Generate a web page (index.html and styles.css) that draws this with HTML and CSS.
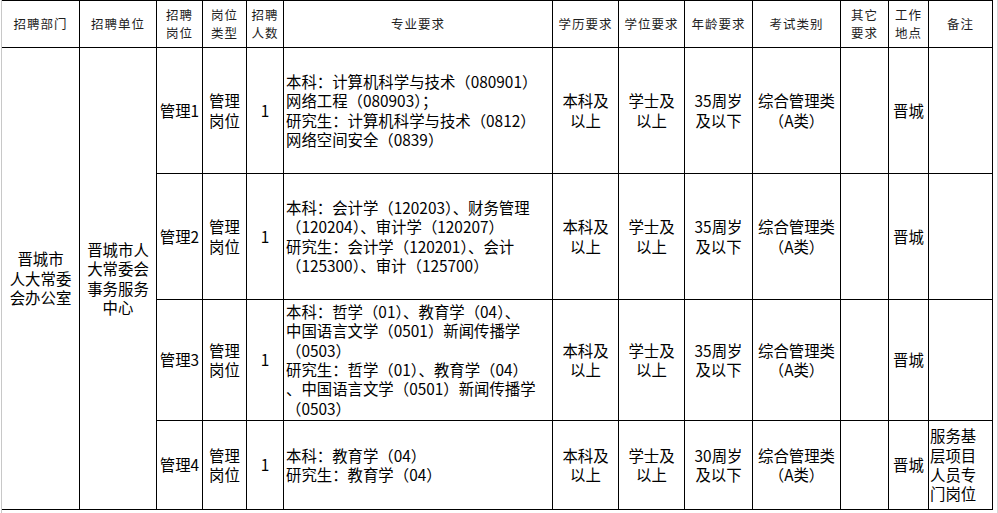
FILE: index.html
```html
<!DOCTYPE html>
<html lang="zh-CN">
<head>
<meta charset="utf-8">
<title>招聘岗位表</title>
<link rel="stylesheet" href="styles.css">
</head>
<body>
<div class="sheet">
  <div class="table">
    <div class="cell head">招聘部门</div>
    <div class="cell head">招聘单位</div>
    <div class="cell head">招聘<br>岗位</div>
    <div class="cell head">岗位<br>类型</div>
    <div class="cell head">招聘<br>人数</div>
    <div class="cell head">专业要求</div>
    <div class="cell head">学历要求</div>
    <div class="cell head">学位要求</div>
    <div class="cell head">年龄要求</div>
    <div class="cell head">考试类别</div>
    <div class="cell head">其它<br>要求</div>
    <div class="cell head">工作<br>地点</div>
    <div class="cell head">备注</div>

    <div class="cell span4">晋城市<br>人大常委<br>会办公室</div>
    <div class="cell span4">晋城市人<br>大常委会<br>事务服务<br>中心</div>
    <div class="cell">管理1</div>
    <div class="cell">管理<br>岗位</div>
    <div class="cell">1</div>
    <div class="cell left">本科：计算机科学与技术（080901）<br>网络工程（080903）；<br>研究生：计算机科学与技术（0812）<br>网络空间安全（0839）</div>
    <div class="cell">本科及<br>以上</div>
    <div class="cell">学士及<br>以上</div>
    <div class="cell">35周岁<br>及以下</div>
    <div class="cell">综合管理类<br>（A类）</div>
    <div class="cell"></div>
    <div class="cell">晋城</div>
    <div class="cell"></div>

    <div class="cell">管理2</div>
    <div class="cell">管理<br>岗位</div>
    <div class="cell">1</div>
    <div class="cell left">本科：会计学（120203）、财务管理<br>（120204）、审计学（120207）<br>研究生：会计学（120201）、会计<br>（125300）、审计（125700）</div>
    <div class="cell">本科及<br>以上</div>
    <div class="cell">学士及<br>以上</div>
    <div class="cell">35周岁<br>及以下</div>
    <div class="cell">综合管理类<br>（A类）</div>
    <div class="cell"></div>
    <div class="cell">晋城</div>
    <div class="cell"></div>

    <div class="cell">管理3</div>
    <div class="cell">管理<br>岗位</div>
    <div class="cell">1</div>
    <div class="cell left">本科：哲学（01）、教育学（04）、<br>中国语言文学（0501）新闻传播学<br>（0503）<br>研究生：哲学（01）、教育学（04）<br>、中国语言文学（0501）新闻传播学<br>（0503）</div>
    <div class="cell">本科及<br>以上</div>
    <div class="cell">学士及<br>以上</div>
    <div class="cell">35周岁<br>及以下</div>
    <div class="cell">综合管理类<br>（A类）</div>
    <div class="cell"></div>
    <div class="cell">晋城</div>
    <div class="cell"></div>

    <div class="cell">管理4</div>
    <div class="cell">管理<br>岗位</div>
    <div class="cell">1</div>
    <div class="cell left">本科：教育学（04）<br>研究生：教育学（04）</div>
    <div class="cell">本科及<br>以上</div>
    <div class="cell">学士及<br>以上</div>
    <div class="cell">30周岁<br>及以下</div>
    <div class="cell">综合管理类<br>（A类）</div>
    <div class="cell"></div>
    <div class="cell">晋城</div>
    <div class="cell left note">服务基<br>层项目<br>人员专<br>门岗位</div>
  </div>
  <div class="gridline"></div>
</div>
</body>
</html>
```

FILE: styles.css
```css
html, body {
  margin: 0;
  padding: 0;
  background: #fff;
}

body {
  width: 998px;
  height: 513px;
  overflow: hidden;
  font-family: "Noto Sans CJK SC", "Noto Sans", sans-serif;
}

.sheet {
  display: flex;
  margin-left: 1px;
  height: 513px;
  border-left: 1px solid #c8c8c8;
}

.table {
  display: grid;
  grid-template-columns: 77px 76px 45px 43px 36px 268px 65px 65px 67px 87px 47px 39px 63px;
  grid-template-rows: 46px 125px 125px 120px 88px;
  gap: 1px;
  background: #000;
  padding: 1px 1px 1px 0;
  align-self: flex-start;
}

.cell {
  background: #fff;
  display: flex;
  flex-direction: column;
  justify-content: center;
  align-items: center;
  text-align: center;
  font-size: 15.4px;
  line-height: 19.4px;
  color: #000;
  white-space: nowrap;
  overflow: hidden;
}

.head {
  font-size: 12.5px;
  line-height: 18px;
  letter-spacing: 1px;
  color: #1e1e1e;
}

.span4 {
  grid-row: span 4;
}

.left {
  align-items: flex-start;
  text-align: left;
  padding-left: 2px;
}

.note {
  padding-left: 1px;
}

.gridline {
  width: 1px;
  margin-left: 4px;
  background: #d6d6d6;
}
```
